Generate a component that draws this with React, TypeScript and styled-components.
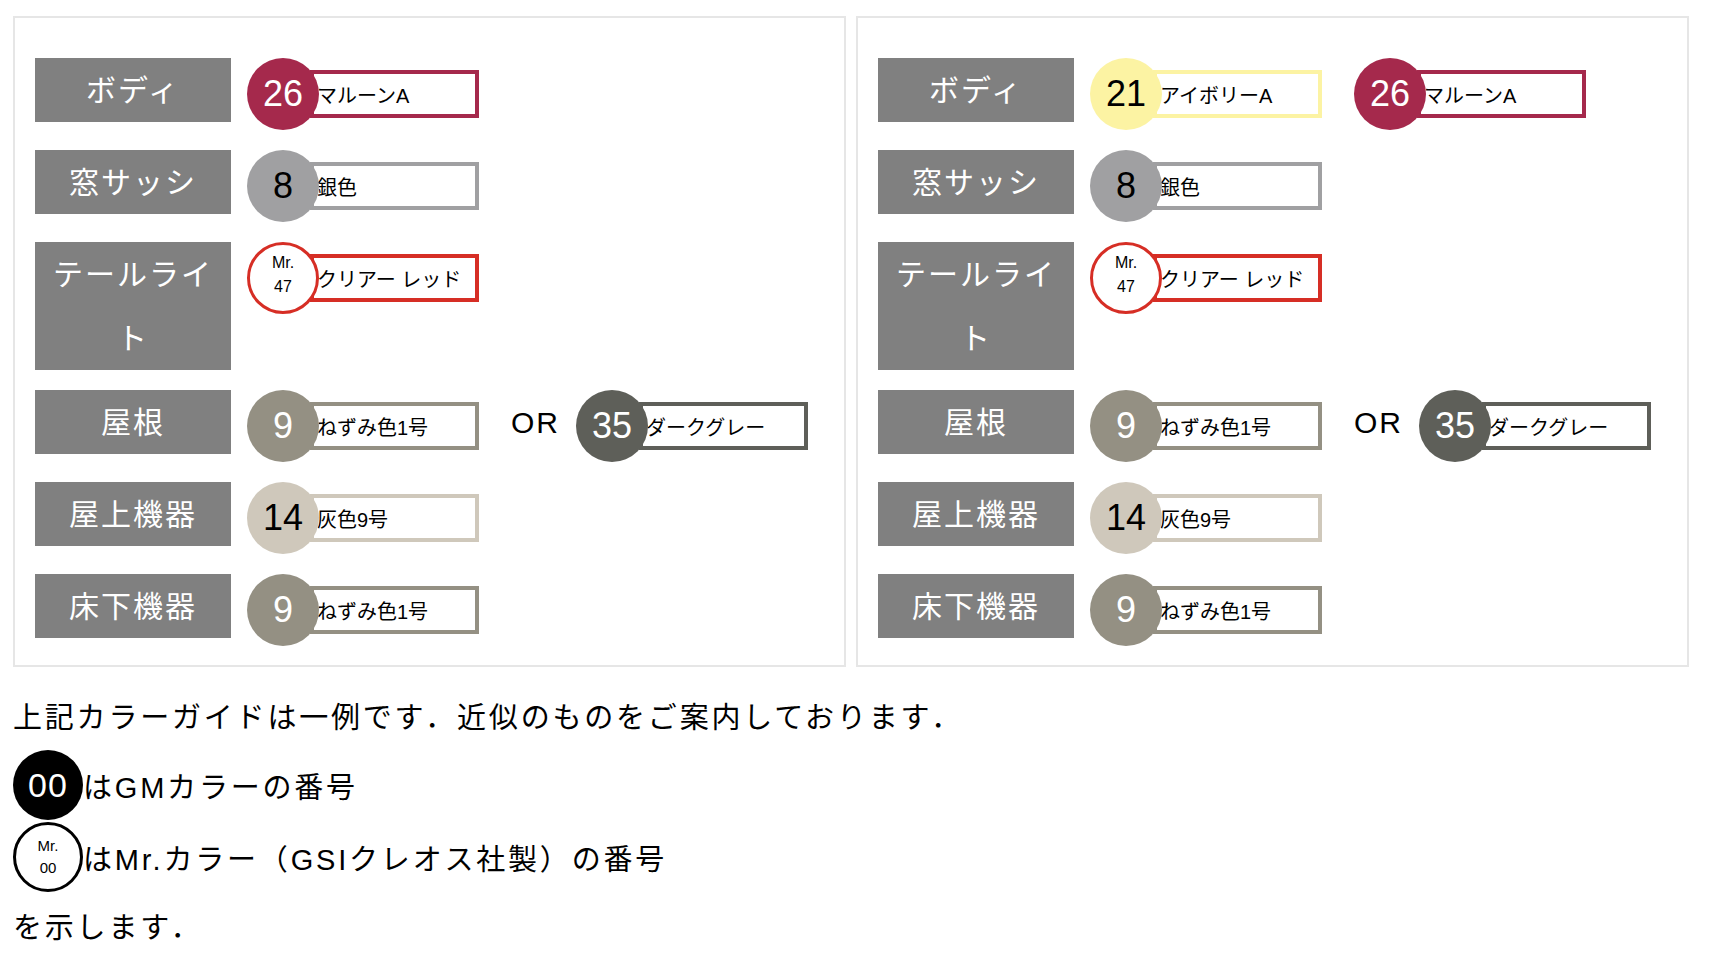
import styled, { createGlobalStyle } from 'styled-components';

const GlobalStyle = createGlobalStyle`
  body {
    margin: 8px;
    background: #fff;
    color: #000;
    font-family: "Liberation Sans", "Noto Sans CJK JP", sans-serif;
  }
`;

const Page = styled.div`
  padding: 8px 5px 0;
`;

const Panels = styled.div`
  display: flex;
  gap: 10px;
`;

const Panel = styled.div`
  width: 833px;
  box-sizing: border-box;
  border: 2px solid #e6e6e6;
  padding: 40px 20px 19px;
`;

const Row = styled.div`
  display: flex;
  align-items: flex-start;
  margin-bottom: 20px;
  &:last-child {
    margin-bottom: 0;
  }
`;

const Label = styled.div`
  width: 196px;
  flex-shrink: 0;
  box-sizing: border-box;
  padding: 0 10px;
  margin-right: 16px;
  background: #808080;
  color: #fff;
  font-family: "Noto Sans CJK JP", sans-serif;
  font-size: 30px;
  line-height: 64px;
  letter-spacing: 2px;
  text-align: center;
  span {
    position: relative;
    top: -2px;
  }
`;

const Chip = styled.div`
  display: flex;
  align-items: center;
  margin-right: 32px;
`;

const Circle = styled.div<{ $bg: string; $fg: string; $ring?: string }>`
  position: relative;
  z-index: 1;
  width: 72px;
  height: 72px;
  flex-shrink: 0;
  box-sizing: border-box;
  border-radius: 50%;
  background: ${(p) => p.$bg};
  color: ${(p) => p.$fg};
  border: ${(p) => (p.$ring ? `3px solid ${p.$ring}` : 'none')};
  padding-bottom: ${(p) => (p.$ring ? '6px' : '0')};
  display: flex;
  flex-direction: column;
  align-items: center;
  justify-content: center;
  font-size: 36px;
  line-height: 1;
`;

const MrText = styled.span`
  font-size: 16px;
  line-height: 24px;
`;

const Box = styled.div<{ $color: string }>`
  width: 169px;
  height: 48px;
  box-sizing: border-box;
  margin-left: -9px;
  padding-left: 3px;
  border: 4px solid ${(p) => p.$color};
  background: #fff;
  display: flex;
  align-items: center;
  font-size: 20px;
  white-space: nowrap;
`;

const Or = styled.div`
  font-size: 30px;
  line-height: 66px;
  letter-spacing: 2px;
  margin-right: 16px;
`;

const Notes = styled.div`
  margin-top: 20px;
  font-size: 29px;
  letter-spacing: 2.8px;
`;

const NoteLine = styled.div<{ $h: number }>`
  height: ${(p) => p.$h}px;
  line-height: ${(p) => p.$h}px;
  white-space: nowrap;
`;

const LegendLine = styled.div`
  display: flex;
  align-items: center;
  height: 72px;
  white-space: nowrap;
`;

const LegendCircle = styled.div<{ $mr?: boolean }>`
  width: 70px;
  height: 70px;
  box-sizing: border-box;
  border-radius: 50%;
  flex-shrink: 0;
  display: flex;
  flex-direction: column;
  align-items: center;
  justify-content: center;
  background: ${(p) => (p.$mr ? '#fff' : '#000')};
  color: ${(p) => (p.$mr ? '#000' : '#fff')};
  border: ${(p) => (p.$mr ? '3px solid #000' : 'none')};
  font-size: 34px;
  line-height: 1;
  letter-spacing: 1px;
`;

const LegendMr = styled.span`
  font-size: 15px;
  line-height: 22px;
  letter-spacing: 0;
`;

type Color = {
  no: string;
  name: string;
  bg: string;
  fg: string;
  mr?: boolean;
};

const COLORS: Record<string, Color> = {
  maroon: { no: '26', name: 'マルーンA', bg: '#a5294c', fg: '#fff' },
  ivory: { no: '21', name: 'アイボリーA', bg: '#fcf3a3', fg: '#000' },
  silver: { no: '8', name: '銀色', bg: '#a0a0a2', fg: '#000' },
  red: { no: '47', name: 'クリアー レッド', bg: '#d62e25', fg: '#000', mr: true },
  nezumi: { no: '9', name: 'ねずみ色1号', bg: '#949083', fg: '#fff' },
  dark: { no: '35', name: 'ダークグレー', bg: '#5e5f59', fg: '#fff' },
  gray9: { no: '14', name: '灰色9号', bg: '#cfc8bb', fg: '#000' },
};

const ColorChip = ({ c }: { c: Color }) => (
  <Chip>
    {c.mr ? (
      <Circle $bg="#fff" $fg="#000" $ring={c.bg}>
        <MrText>Mr.</MrText>
        <MrText>{c.no}</MrText>
      </Circle>
    ) : (
      <Circle $bg={c.bg} $fg={c.fg}>
        {c.no}
      </Circle>
    )}
    <Box $color={c.bg}>{c.name}</Box>
  </Chip>
);

type Part = { label: string; colors: Color[]; or?: Color };

const left: Part[] = [
  { label: 'ボディ', colors: [COLORS.maroon] },
  { label: '窓サッシ', colors: [COLORS.silver] },
  { label: 'テールライト', colors: [COLORS.red] },
  { label: '屋根', colors: [COLORS.nezumi], or: COLORS.dark },
  { label: '屋上機器', colors: [COLORS.gray9] },
  { label: '床下機器', colors: [COLORS.nezumi] },
];

const right: Part[] = [
  { label: 'ボディ', colors: [COLORS.ivory, COLORS.maroon] },
  { label: '窓サッシ', colors: [COLORS.silver] },
  { label: 'テールライト', colors: [COLORS.red] },
  { label: '屋根', colors: [COLORS.nezumi], or: COLORS.dark },
  { label: '屋上機器', colors: [COLORS.gray9] },
  { label: '床下機器', colors: [COLORS.nezumi] },
];

const GuidePanel = ({ parts }: { parts: Part[] }) => (
  <Panel>
    {parts.map((p) => (
      <Row key={p.label}>
        <Label>
          <span>{p.label}</span>
        </Label>
        {p.colors.map((c) => (
          <ColorChip key={c.no} c={c} />
        ))}
        {p.or && (
          <>
            <Or>OR</Or>
            <ColorChip c={p.or} />
          </>
        )}
      </Row>
    ))}
  </Panel>
);

const App = () => {
  return (
    <Page>
      <GlobalStyle />
      <Panels>
        <GuidePanel parts={left} />
        <GuidePanel parts={right} />
      </Panels>
      <Notes>
        <NoteLine $h={62}>上記カラーガイドは一例です．近似のものをご案内しております．</NoteLine>
        <LegendLine>
          <LegendCircle>00</LegendCircle>
          はGMカラーの番号
        </LegendLine>
        <LegendLine>
          <LegendCircle $mr>
            <LegendMr>Mr.</LegendMr>
            <LegendMr>00</LegendMr>
          </LegendCircle>
          はMr.カラー（GSIクレオス社製）の番号
        </LegendLine>
        <NoteLine $h={70}>を示します．</NoteLine>
      </Notes>
    </Page>
  );
};

export default App;
